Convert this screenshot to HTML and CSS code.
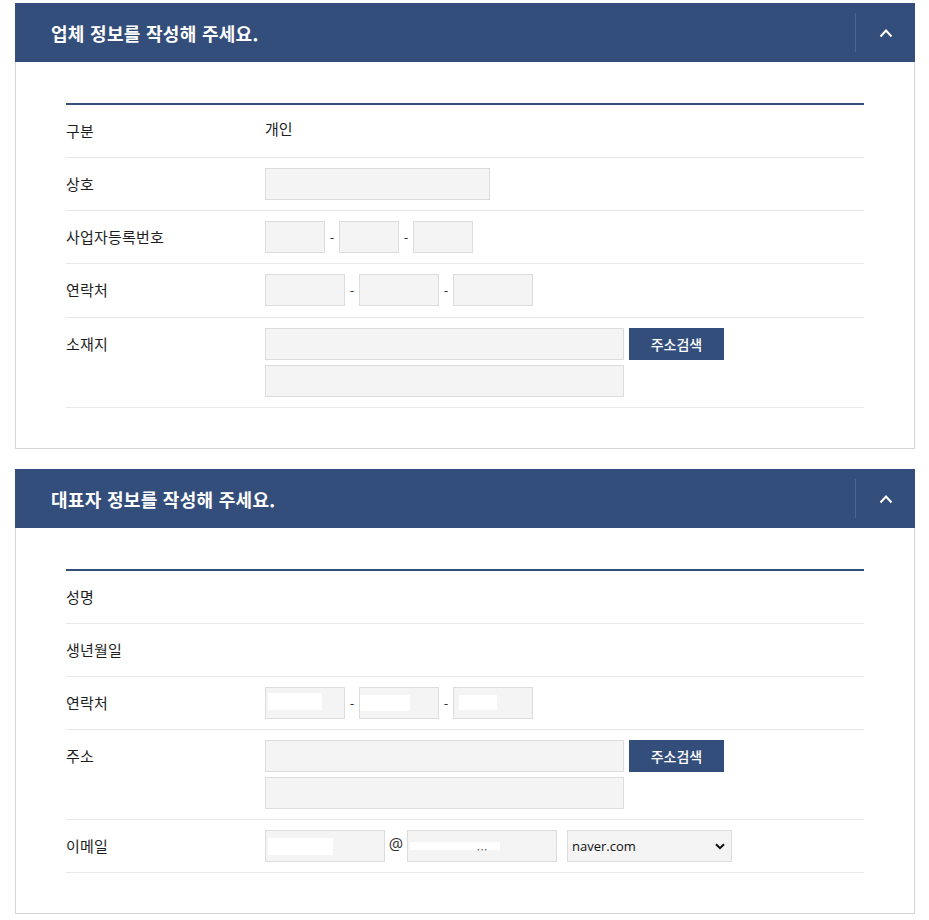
FILE: index.html
```html
<!DOCTYPE html>
<html lang="ko">
<head>
<meta charset="utf-8">
<title>정보 작성</title>
<link rel="stylesheet" href="styles.css">
</head>
<body>
<section class="panel">
  <header class="panel-head">
    <h2 class="panel-title">업체 정보를 작성해 주세요.</h2>
    <button class="toggle" type="button" aria-label="접기">
      <svg width="14" height="10" viewBox="0 0 14 10"><polyline points="1.5,8.5 7,2.5 12.5,8.5" fill="none" stroke="#fff" stroke-width="2"/></svg>
    </button>
  </header>
  <div class="panel-body">
    <div class="form-table">
      <div class="row">
        <div class="label">구분</div>
        <div class="value text">개인</div>
      </div>
      <div class="row">
        <div class="label">상호</div>
        <div class="value"><input class="inp w225" type="text"></div>
      </div>
      <div class="row">
        <div class="label">사업자등록번호</div>
        <div class="value">
          <input class="inp w60" type="text"><span class="sep">-</span><input class="inp w60" type="text"><span class="sep">-</span><input class="inp w60" type="text">
        </div>
      </div>
      <div class="row row-tall">
        <div class="label">연락처</div>
        <div class="value">
          <input class="inp w80" type="text"><span class="sep">-</span><input class="inp w80" type="text"><span class="sep">-</span><input class="inp w80" type="text">
        </div>
      </div>
      <div class="row">
        <div class="label">소재지</div>
        <div class="value stack">
          <div class="line"><input class="inp w359" type="text"><button class="btn" type="button">주소검색</button></div>
          <div class="line"><input class="inp w359" type="text"></div>
        </div>
      </div>
    </div>
  </div>
</section>

<section class="panel">
  <header class="panel-head">
    <h2 class="panel-title">대표자 정보를 작성해 주세요.</h2>
    <button class="toggle" type="button" aria-label="접기">
      <svg width="14" height="10" viewBox="0 0 14 10"><polyline points="1.5,8.5 7,2.5 12.5,8.5" fill="none" stroke="#fff" stroke-width="2"/></svg>
    </button>
  </header>
  <div class="panel-body">
    <div class="form-table">
      <div class="row">
        <div class="label">성명</div>
        <div class="value text"></div>
      </div>
      <div class="row">
        <div class="label">생년월일</div>
        <div class="value text"></div>
      </div>
      <div class="row">
        <div class="label">연락처</div>
        <div class="value">
          <input class="inp w80 redact-a" type="text"><span class="sep">-</span><input class="inp w80 redact-b" type="text"><span class="sep">-</span><input class="inp w80 redact-c" type="text">
        </div>
      </div>
      <div class="row">
        <div class="label">주소</div>
        <div class="value stack">
          <div class="line"><input class="inp w359" type="text"><button class="btn" type="button">주소검색</button></div>
          <div class="line"><input class="inp w359" type="text"></div>
        </div>
      </div>
      <div class="row">
        <div class="label">이메일</div>
        <div class="value">
          <input class="inp w120 redact-d" type="text"><span class="at">@</span><input class="inp w150 redact-e" type="text" value="…">
          <div class="select-wrap">
            <select class="sel">
              <option>naver.com</option>
              <option>daum.net</option>
              <option>gmail.com</option>
            </select>
            <svg class="sel-arrow" width="10" height="7" viewBox="0 0 10 7"><polyline points="1,1.2 5,5.2 9,1.2" fill="none" stroke="#111" stroke-width="2"/></svg>
          </div>
        </div>
      </div>
    </div>
  </div>
</section>
</body>
</html>
```

FILE: styles.css
```css
* { box-sizing: border-box; }

body {
  margin: 0;
  padding: 3px 14px 20px 15px;
  background: #fff;
  font-family: "Noto Sans CJK KR", "Noto Sans", sans-serif;
  color: #222;
}

.panel + .panel { margin-top: 20px; }

.panel-head {
  display: flex;
  align-items: center;
  height: 59px;
  background: #344e7b;
  padding-left: 36px;
}

.panel-title {
  flex: 1;
  margin: 0;
  font-size: 18px;
  font-weight: 700;
  color: #fff;
  letter-spacing: 0.3px;
}

.toggle {
  width: 60px;
  height: 39px;
  border: 0;
  border-left: 1px solid #4c6590;
  background: transparent;
  padding: 0;
  display: flex;
  align-items: center;
  justify-content: center;
  cursor: pointer;
}

.panel-body {
  border: 1px solid #d4d4d4;
  border-top: 0;
  padding: 41px 50px 40px;
}

.form-table {
  border-top: 2px solid #344e7b;
}

.row {
  display: flex;
  align-items: flex-start;
  padding: 10px 0;
  border-bottom: 1px solid #e8e8e8;
}

.row-tall { padding-bottom: 11px; }

.label {
  width: 199px;
  flex: none;
  font-size: 15px;
  line-height: 32px;
  color: #1e1e1e;
  letter-spacing: 0.2px;
}

.value {
  display: flex;
  align-items: center;
  min-height: 32px;
  font-size: 15px;
  color: #1e1e1e;
}

.value.text {
  line-height: 28px;
  align-items: flex-start;
}

.value.stack {
  flex-direction: column;
  align-items: flex-start;
  gap: 5px;
}

.line {
  display: flex;
  align-items: center;
  gap: 5px;
}

.inp {
  height: 32px;
  border: 1px solid #dcdcdc;
  background: #f4f4f4;
  padding: 0 8px;
  font: inherit;
  font-size: 13px;
  outline: none;
}

.w60 { width: 60px; }
.w80 { width: 80px; }
.w120 { width: 120px; }
.w150 { width: 150px; }
.w225 { width: 225px; }
.w359 { width: 359px; }

.sep {
  width: 14px;
  text-align: center;
  font-size: 13px;
  color: #333;
}

.at {
  width: 22px;
  text-align: center;
  font-family: "Open Sans", "Noto Sans", sans-serif;
  font-size: 16px;
  color: #333;
  margin-top: -5px;
}

.btn {
  width: 95px;
  height: 32px;
  border: 0;
  background: #344e7b;
  color: #fff;
  font: inherit;
  font-size: 14px;
  font-weight: 500;
  cursor: pointer;
}

.select-wrap {
  position: relative;
  margin-left: 10px;
}

.sel {
  -webkit-appearance: none;
  appearance: none;
  width: 165px;
  height: 32px;
  border: 1px solid #dcdcdc;
  background: #f4f4f4;
  padding: 0 24px 0 4px;
  font-family: "Open Sans", "Noto Sans", sans-serif;
  font-size: 13px;
  color: #111;
  outline: none;
}

.sel-arrow {
  position: absolute;
  right: 7px;
  top: 13px;
  pointer-events: none;
}

/* masked (redacted) values */
.redact-a { background: linear-gradient(#fff, #fff) no-repeat 2px 5px / 54px 17px, #f4f4f4; }
.redact-b { background: linear-gradient(#fff, #fff) no-repeat 0 7px / 50px 16px, #f4f4f4; }
.redact-c { background: linear-gradient(#fff, #fff) no-repeat 5px 7px / 38px 15px, #f4f4f4; }
.redact-d { background: linear-gradient(#fff, #fff) no-repeat 2px 7px / 65px 17px, #f4f4f4; }
.redact-e {
  background: linear-gradient(#fff, #fff) no-repeat 2px 11px / 90px 8px, #f4f4f4;
  text-align: center;
  font-size: 11px;
  color: #555;
  padding-top: 6px;
}
```
